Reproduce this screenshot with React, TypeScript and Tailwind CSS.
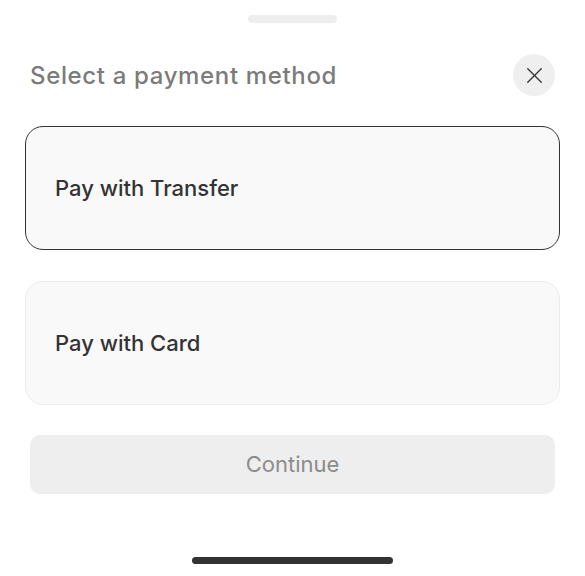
import { X } from "lucide-react";

const methods = ["Pay with Transfer", "Pay with Card"];

export default function App() {
  const selected = 0;
  return (
    <div
      className="w-[585px] h-[576px] bg-white flex flex-col overflow-hidden"
      style={{ fontFamily: "Inter, 'Noto Sans', sans-serif" }}
    >
      <div className="flex justify-center pt-[15px]">
        <div className="w-[89px] h-[8px] rounded-full bg-[#eeeeee]" />
      </div>

      <div className="flex items-center justify-between pl-[30px] pr-[30px] mt-[31px]">
        <h2 className="text-[24px] font-medium text-[#7b7b7b] tracking-[0.65px] pt-[2px]">
          Select a payment method
        </h2>
        <button className="w-[42px] h-[42px] rounded-full bg-[#efefef] flex items-center justify-center text-[#333]">
          <X size={27} strokeWidth={1.2} />
        </button>
      </div>

      <div className="flex flex-col gap-[31px] px-[25px] mt-[30px]">
        {methods.map((m, i) => (
          <div
            key={m}
            className={
              i === selected
                ? "h-[124px] rounded-[18px] bg-[#f9f9f9] border-[1.5px] border-[#333333] flex items-center pl-[29px]"
                : "h-[124px] rounded-[18px] bg-[#f9f9f9] border border-[#ececec] flex items-center pl-[29px]"
            }
          >
            <span className="text-[22px] font-medium text-[#333333]">{m}</span>
          </div>
        ))}
      </div>

      <div className="px-[30px] mt-[30px]">
        <button className="w-full h-[59px] rounded-[10px] bg-[#eeeeee] text-[22px] text-[#8c8c8c]">
          Continue
        </button>
      </div>

      <div className="flex justify-center mt-auto mb-[12px]">
        <div className="w-[201px] h-[7px] rounded-full bg-[#333333]" />
      </div>
    </div>
  );
}
